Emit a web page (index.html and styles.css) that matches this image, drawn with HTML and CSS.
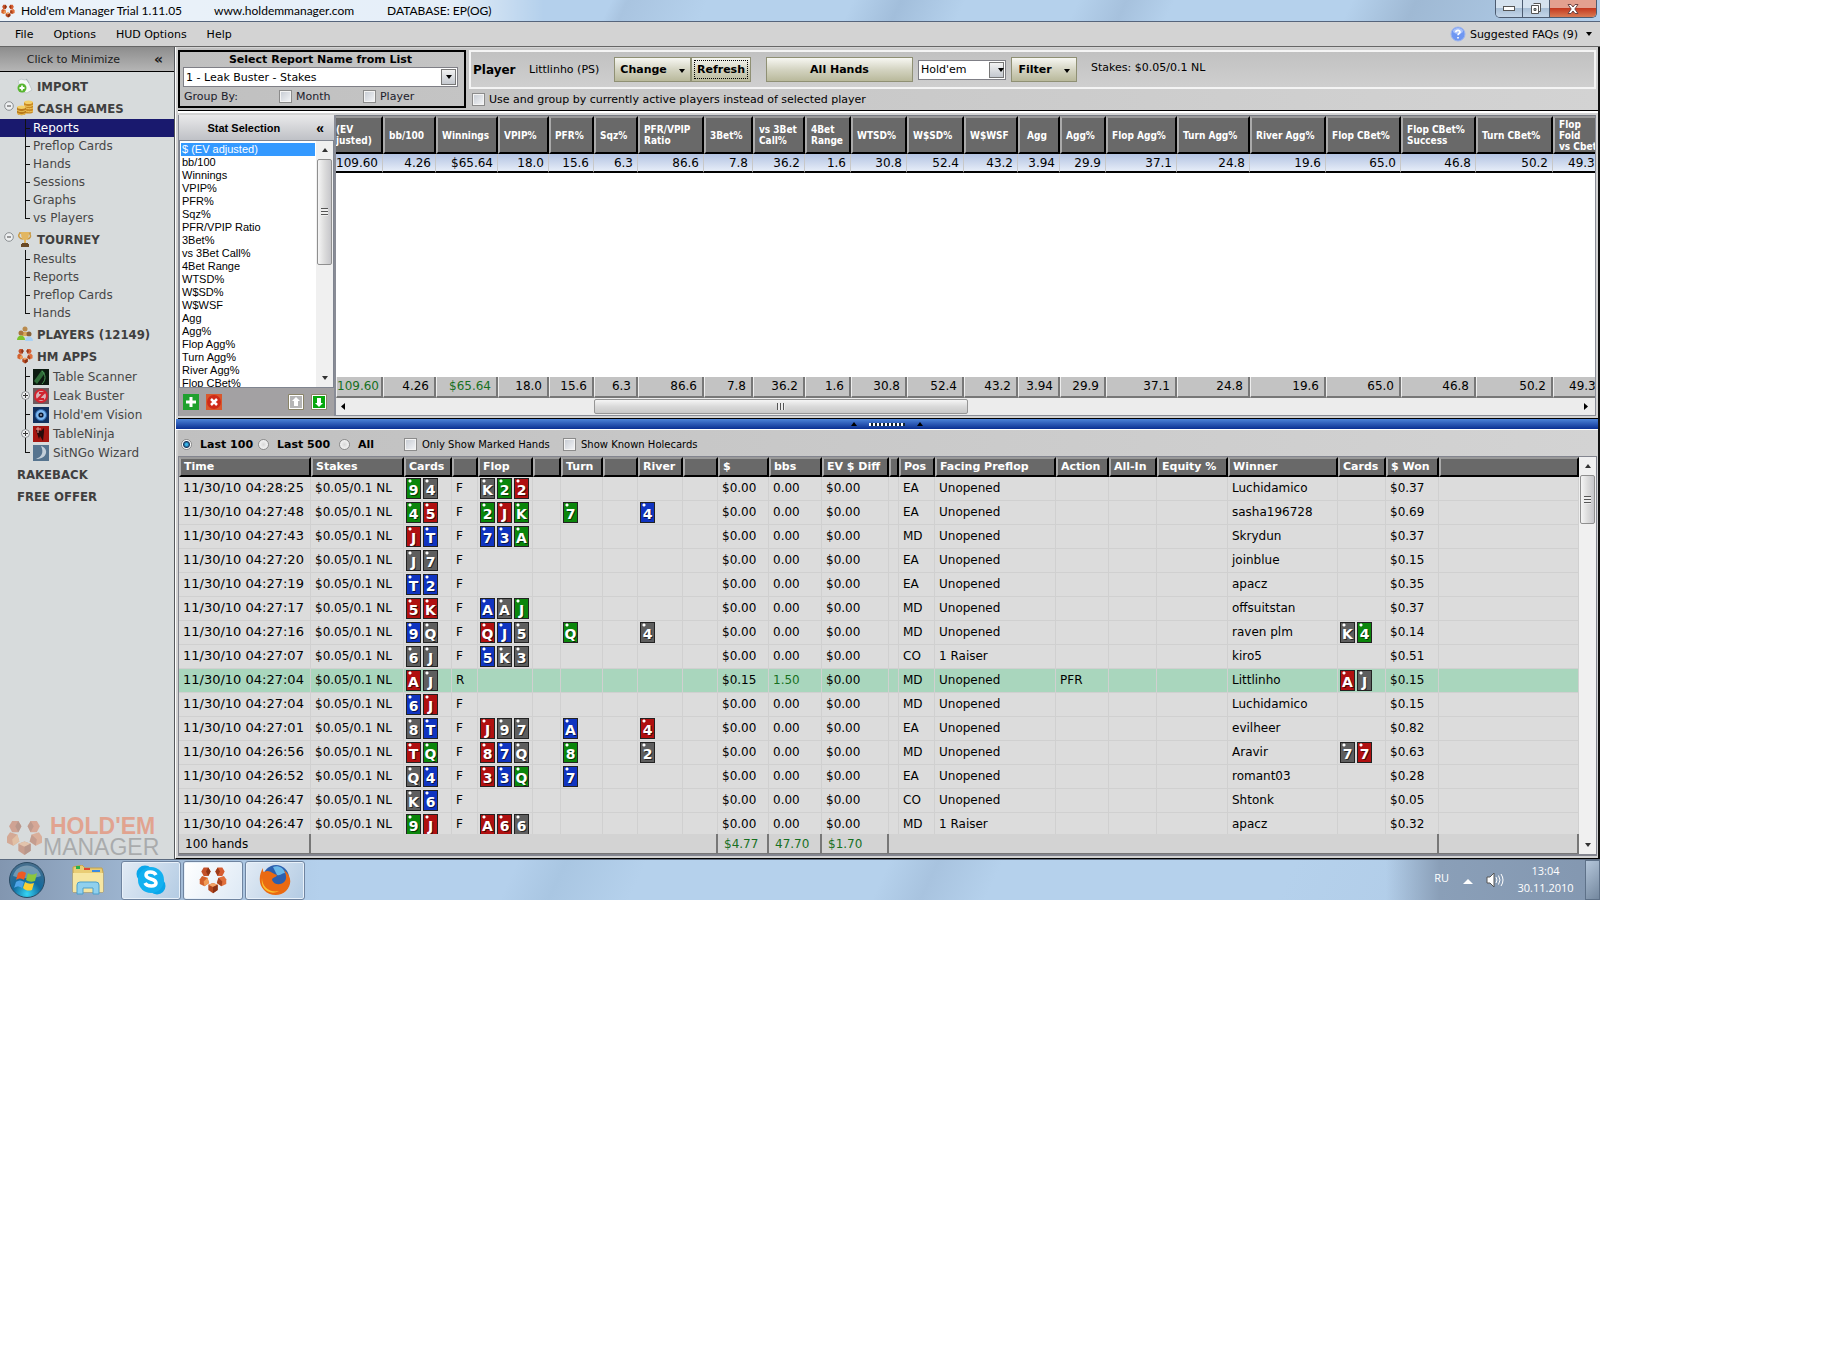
FILE: index.html
```html
<!DOCTYPE html>
<html lang="en">
<head>
<meta charset="utf-8">
<title>Hold'em Manager</title>
<link rel="stylesheet" href="styles.css">
</head>
<body>
<svg class="defs" aria-hidden="true">
  <symbol id="hm" viewBox="0 0 36 36">
    <path d="M6 2h6l3 5-3 6H6L3 7z" fill="#c4512a"/><path d="M12 2l3 5-3 6-3-6z" fill="#8e3416"/>
    <path d="M24 2h6l3 5-3 6h-6l-3-6z" fill="#d65c30"/><path d="M24 2l-3 5 3 6 3-6z" fill="#9c3b19"/>
    <path d="M4 13l7 2 2 7-6 4-6-3v-6z" fill="#d2602c"/><path d="M11 15l2 7-6 4-1-6z" fill="#f09a55"/>
    <path d="M32 13l-7 2-2 7 6 4 6-3v-6z" fill="#e0703c"/><path d="M25 15l-2 7 6 4 1-6z" fill="#a9431d"/>
    <path d="M12 24l6-2 6 2v7l-6 4-6-4z" fill="#b4481f"/><path d="M12 24l6-2 6 2-6 3z" fill="#f3a468"/><path d="M18 27l6-3v7l-6 4z" fill="#8b3214"/>
  </symbol>
  <symbol id="minus" viewBox="0 0 10 10"><circle cx="5" cy="5" r="4.300" fill="#eef0f1" stroke="#8b8f92"/><path d="M3 5h4" stroke="#444"/></symbol>
  <symbol id="plus" viewBox="0 0 12 19"><path d="M5.500 0v19" stroke="#111"/><circle cx="5.500" cy="9.500" r="4" fill="#eef0f1" stroke="#8b8f92"/><path d="M3 9.500h5M5.500 7v5" stroke="#333"/></symbol>
  <symbol id="down" viewBox="0 0 6 4"><path d="M0 0h6L3 4z" fill="currentColor"/></symbol>
  <symbol id="up" viewBox="0 0 6 4"><path d="M0 4h6L3 0z" fill="currentColor"/></symbol>
</svg>
<div class="desktop">
  <header class="titlebar">
    <svg class="app-icon"><use href="#hm"/></svg>
    <span class="t1">Hold'em Manager Trial 1.11.05</span><span class="t2">www.holdemmanager.com</span><span>DATABASE: EP(OG)</span>
    <div class="win-buttons">
      <button aria-label="Minimize"><svg width="12" height="6"><rect x=".5" y=".5" width="11" height="4" fill="#fff" stroke="#555"/></svg></button>
      <button aria-label="Restore"><svg width="12" height="12"><path d="M3.500 .5h7v8h-2M1.500 2.500h7v8h-7z" fill="#fff" stroke="#555"/><path d="M4 5.500h2v2H4z" fill="#9bb" stroke="#555"/></svg></button>
      <button class="close" aria-label="Close"><svg width="12" height="10"><path d="M1 .5h3l2 2.500L8 .5h3L7.800 5 11 9.500H8L6 7 4 9.500H1L4.200 5z" fill="#fff" stroke="#6b4545"/></svg></button>
    </div>
  </header>
  <nav class="menubar">
    <a href="#">File</a><a href="#">Options</a><a href="#">HUD Options</a><a href="#">Help</a>
    <a href="#" class="faq"><svg width="16" height="16"><circle cx="8" cy="8" r="7" fill="#6f97f2" stroke="#9db5ee"/><ellipse cx="8" cy="5" rx="5" ry="3" fill="#a9c2fb"/><path d="M5.800 6.300C6 3.600 10.200 3.800 10 6.200 9.900 7.600 8 7.500 8 9.300M8 11v1.600" stroke="#fff" stroke-width="1.700" fill="none"/></svg>Suggested FAQs (9)<svg class="tri"><use href="#down"/></svg></a>
  </nav>

  <div class="work">
    <aside class="sidebar">
      <button class="collapse">Click to Minimize <b>«</b></button>
      <nav class="tree">
        <h2><svg class="ico" viewBox="0 0 16 16"><path d="M4 1l4 1 2-1 5 11-5 3-5-1L1 3z" fill="#f6f8f8" stroke="#c2cacc"/><path d="M9 1l3 4" stroke="#a9b2b4"/><circle cx="5" cy="10" r="4.500" fill="#58b530"/><path d="M5 7.500v5M2.500 10h5" stroke="#fff" stroke-width="1.800"/></svg>IMPORT</h2>
        <h2 class="open"><svg class="exp"><use href="#minus"/></svg><svg class="ico" viewBox="0 0 16 16"><path d="M7 2v10c0 2 9 2 9 0V2z" fill="#c98a24"/><path d="M0 7v6c0 3 9 3 9 0V7z" fill="#b87a1c"/><g fill="#f3cf6a"><ellipse cx="11.500" cy="2.300" rx="4.300" ry="1.800"/><ellipse cx="4.500" cy="7.300" rx="4.300" ry="1.700"/></g><path d="M7 5c2 2 7 2 9 0M9 8c2 1 5 1 7 0M9 11c2 1 5 1 7 0M0 10c2 2 7 2 9 0M0 13c2 2 7 2 9 0" stroke="#f0c65c" fill="none"/></svg>CASH GAMES</h2>
        <ul>
          <li class="sel"><a href="#">Reports</a></li><li><a href="#">Preflop Cards</a></li><li><a href="#">Hands</a></li><li><a href="#">Sessions</a></li><li><a href="#">Graphs</a></li><li><a href="#">vs Players</a></li>
        </ul>
        <h2 class="open"><svg class="exp"><use href="#minus"/></svg><svg class="ico" viewBox="0 0 16 16"><path d="M2 2h12M3 2c-3 3 0 6 3 6M12 2c3 3 1 6-2 6" stroke="#c99a44" stroke-width="1.500" fill="none"/><path d="M4 1h8c0 5-1 8-3 8v3H7V9C5 9 4 6 4 1z" fill="#e2b660"/><path d="M5 12h6v1H5zM4 13h8v3H4z" fill="#6a4a26"/></svg>TOURNEY</h2>
        <ul>
          <li><a href="#">Results</a></li><li><a href="#">Reports</a></li><li><a href="#">Preflop Cards</a></li><li><a href="#">Hands</a></li>
        </ul>
        <h2><svg class="ico" viewBox="0 0 16 16"><circle cx="8" cy="3" r="2.500" fill="#b98b4e"/><path d="M5 10V6h6v4z" fill="#d9a95c"/><circle cx="4" cy="7" r="2.500" fill="#a9743c"/><path d="M0 14c0-6 8-6 8 0z" fill="#7cc32c"/><circle cx="12" cy="8" r="2.500" fill="#8a6238"/><path d="M8 15c0-6 8-6 8 0z" fill="#a9d0f3"/></svg>PLAYERS (12149)</h2>
        <h2><svg class="ico"><use href="#hm"/></svg>HM APPS</h2>
        <ul class="apps">
          <li><a href="#"><svg class="ico" viewBox="0 0 16 16"><path d="M0 0h16v16H0z" fill="#0c1a10"/><path d="M1 12L9 1l3 3-8 11z" fill="#2e6a38"/><path d="M9 2c4 4 4 9 0 13" stroke="#4c9a58" fill="none"/></svg>Table Scanner</a></li>
          <li class="more"><svg class="joint"><use href="#plus"/></svg><a href="#"><svg class="ico" viewBox="0 0 16 16"><path d="M0 0h16v16H0z" fill="#6d5a5e"/><circle cx="8" cy="8" r="6" fill="#d8b0b4" stroke="#d2232e" stroke-width="2"/><path d="M4 12l8-8M6 5h4l-4 6h5" stroke="#d2232e" stroke-width="2" fill="none"/></svg>Leak Buster</a></li>
          <li><a href="#"><svg class="ico" viewBox="0 0 16 16"><path d="M0 0h16v16H0z" fill="#12315e"/><circle cx="8" cy="8" r="5.500" fill="#7db7ee" stroke="#2b66ac"/><circle cx="8" cy="8" r="2.600" fill="#0a1730"/><circle cx="8" cy="8" r=".8" fill="#fff"/></svg>Hold'em Vision</a></li>
          <li class="more"><svg class="joint"><use href="#plus"/></svg><a href="#"><svg class="ico" viewBox="0 0 16 16"><path d="M0 0h16v16H0z" fill="#a51610"/><path d="M3 4l5 1 3-3v4l-1 9-3-5-1 3z" fill="#2a0b0a"/><path d="M5 1v6M3 3h5" stroke="#e59a90"/></svg>TableNinja</a></li>
          <li><a href="#"><svg class="ico" viewBox="0 0 16 16"><path d="M0 0h16v16H0z" fill="#56748f"/><path d="M8 1c8 2 7 13-5 13 6-2 8-7 5-13z" fill="#c3cfda"/></svg>SitNGo Wizard</a></li>
        </ul>
        <h2>RAKEBACK</h2>
        <h2>FREE OFFER</h2>
      </nav>
      <div class="brand"><svg><use href="#hm"/></svg><div><strong>HOLD'EM</strong><span>MANAGER</span></div></div>
    </aside>

    <main>
      <section class="toolbar">
        <div class="report-box">
          <label for="rep">Select Report Name from List</label>
          <div class="drop"><select id="rep"><option>1 - Leak Buster - Stakes</option></select><span><svg class="tri"><use href="#down"/></svg></span></div>
          <div class="group"><span>Group By:</span><label class="chk g1"><input type="checkbox">Month</label><label class="chk"><input type="checkbox">Player</label></div>
        </div>
        <div class="player-area">
          <div class="player-bar">
            <strong>Player</strong><span class="pname">Littlinho (PS)</span>
            <button class="change">Change <svg class="tri"><use href="#down"/></svg></button><button class="refresh">Refresh</button>
            <button class="all">All Hands</button>
            <div class="drop game"><select aria-label="Game"><option>Hold'em</option></select><span><svg class="tri"><use href="#down"/></svg></span></div>
            <button class="filter">Filter <svg class="tri"><use href="#down"/></svg></button>
            <span class="stakes">Stakes: $0.05/0.1 NL</span>
          </div>
          <label class="chk active"><input type="checkbox">Use and group by currently active players instead of selected player</label>
        </div>
      </section>

      <section class="stats">
        <div class="stat-pane">
          <h3><span>Stat Selection</span><b>«</b></h3>
          <div class="stat-body">
            <ul>
              <li class="on">$ (EV adjusted)</li><li>bb/100</li><li>Winnings</li><li>VPIP%</li><li>PFR%</li><li>Sqz%</li><li>PFR/VPIP Ratio</li><li>3Bet%</li><li>vs 3Bet Call%</li><li>4Bet Range</li><li>WTSD%</li><li>W$SD%</li><li>W$WSF</li><li>Agg</li><li>Agg%</li><li>Flop Agg%</li><li>Turn Agg%</li><li>River Agg%</li><li>Flop CBet%</li>
            </ul>
            <div class="vbar"><svg class="arr"><use href="#up"/></svg><div class="thumb t-long"><i></i></div><svg class="arr end"><use href="#down"/></svg></div>
          </div>
          <div class="stat-tools">
            <button aria-label="Add"><svg width="16" height="16"><path d="M0 0h16v16H0z" fill="#1fa02e"/><path d="M8 3v10M3 8h10" stroke="#fff" stroke-width="3"/></svg></button>
            <button aria-label="Remove"><svg width="16" height="16"><path d="M0 0h16v16H0z" fill="#d9572c"/><circle cx="8" cy="8" r="7" fill="#cf2b18"/><path d="M5 5l6 6M11 5l-6 6" stroke="#fff" stroke-width="2.500"/></svg></button>
            <button class="push" aria-label="Move up"><svg width="16" height="16"><path d="M.5 .5h15v15H.5z" fill="#fff" stroke="#8a8468"/><path d="M2 2h12v12H2z" fill="#b5b5b5"/><path d="M8 3l4 4h-2v5H6V7H4z" fill="#fff"/></svg></button>
            <button class="dn" aria-label="Move down"><svg width="16" height="16"><path d="M.5 .5h15v15H.5z" fill="#fff" stroke="#8a8468"/><path d="M2 2h12v12H2z" fill="#06a80c"/><path d="M8 13l4-4h-2V4H6v5H4z" fill="#fff"/></svg></button>
          </div>
        </div>
        <div class="stat-grid">
          <table class="sg">
            <colgroup><col class="w47"><col class="w53"><col class="w62"><col class="w51"><col class="w45"><col class="w44"><col class="w66"><col class="w49"><col class="w52"><col class="w46"><col class="w56"><col class="w57"><col class="w54"><col class="w42"><col class="w46"><col class="w71"><col class="w73"><col class="w76"><col class="w75"><col class="w75"><col class="w77"><col></colgroup>
            <thead><tr><th class="cut">(EV<br>justed)<th>bb/100<th>Winnings<th>VPIP%<th>PFR%<th>Sqz%<th>PFR/VPIP<br>Ratio<th>3Bet%<th>vs 3Bet<br>Call%<th>4Bet<br>Range<th>WTSD%<th>W$SD%<th>W$WSF<th class="mid">Agg<th>Agg%<th>Flop Agg%<th>Turn Agg%<th>River Agg%<th>Flop CBet%<th>Flop CBet%<br>Success<th>Turn CBet%<th class="last">Flop<br>Fold<br>vs Cbet</tr></thead>
            <tbody><tr><td>109.60<td>4.26<td>$65.64<td>18.0<td>15.6<td>6.3<td>86.6<td>7.8<td>36.2<td>1.6<td>30.8<td>52.4<td>43.2<td>3.94<td>29.9<td>37.1<td>24.8<td>19.6<td>65.0<td>46.8<td>50.2<td class="last">49.3</tr></tbody>
          </table>
          <div class="blank"></div>
          <table class="sg totals">
            <colgroup><col class="w47"><col class="w53"><col class="w62"><col class="w51"><col class="w45"><col class="w44"><col class="w66"><col class="w49"><col class="w52"><col class="w46"><col class="w56"><col class="w57"><col class="w54"><col class="w42"><col class="w46"><col class="w71"><col class="w73"><col class="w76"><col class="w75"><col class="w75"><col class="w77"><col></colgroup>
            <tbody><tr><td class="pos">109.60<td>4.26<td class="pos">$65.64<td>18.0<td>15.6<td>6.3<td>86.6<td>7.8<td>36.2<td>1.6<td>30.8<td>52.4<td>43.2<td>3.94<td>29.9<td>37.1<td>24.8<td>19.6<td>65.0<td>46.8<td>50.2<td class="last">49.3</tr></tbody>
          </table>
          <div class="hbar"><svg width="4" height="7"><path d="M4 0v7L0 3.500z"/></svg><div class="hthumb"><i></i></div><svg class="end" width="4" height="7"><path d="M0 0v7l4-3.500z"/></svg></div>
        </div>
      </section>

      <div class="splitter"><svg class="tri"><use href="#up"/></svg><i></i><svg class="tri"><use href="#up"/></svg></div>

      <section class="hands">
        <div class="range">
          <label class="rad"><input type="radio" name="n" checked>Last 100</label><label class="rad"><input type="radio" name="n">Last 500</label><label class="rad all-r"><input type="radio" name="n">All</label>
          <label class="chk small k1"><input type="checkbox">Only Show Marked Hands</label><label class="chk small"><input type="checkbox">Show Known Holecards</label>
        </div>
        <div class="hand-frame">
          <div class="hand-tables">
            <div class="scroll">
            <table class="hg">
              <colgroup><col class="w132"><col class="w93"><col class="w48"><col class="w26"><col class="w55"><col class="w28"><col class="w42"><col class="w35"><col class="w45"><col class="w35"><col class="w51"><col class="w53"><col class="w67"><col class="w10"><col class="w36"><col class="w121"><col class="w53"><col class="w48"><col class="w71"><col class="w110"><col class="w48"><col class="w53"><col></colgroup>
              <thead><tr><th>Time<th>Stakes<th>Cards<th><th>Flop<th><th>Turn<th><th>River<th><th>$<th>bbs<th>EV $ Diff<th><th>Pos<th>Facing Preflop<th>Action<th>All-In<th>Equity %<th>Winner<th>Cards<th>$ Won<th></tr></thead>
              <tbody>
              <tr><td>11/30/10 04:28:25<td>$0.05/0.1 NL<td class="cs"><i class="g">9</i><i class="k">4</i><td>F<td class="cs"><i class="k">K</i><i class="g">2</i><i class="r">2</i><td><td class="cs"><td><td class="cs"><td><td>$0.00<td>0.00<td>$0.00<td><td>EA<td>Unopened<td><td><td><td>Luchidamico<td class="cs"><td>$0.37<td></tr>
              <tr><td>11/30/10 04:27:48<td>$0.05/0.1 NL<td class="cs"><i class="g">4</i><i class="r">5</i><td>F<td class="cs"><i class="g">2</i><i class="r">J</i><i class="g">K</i><td><td class="cs"><i class="g">7</i><td><td class="cs"><i class="b">4</i><td><td>$0.00<td>0.00<td>$0.00<td><td>EA<td>Unopened<td><td><td><td>sasha196728<td class="cs"><td>$0.69<td></tr>
              <tr><td>11/30/10 04:27:43<td>$0.05/0.1 NL<td class="cs"><i class="r">J</i><i class="b">T</i><td>F<td class="cs"><i class="b">7</i><i class="b">3</i><i class="g">A</i><td><td class="cs"><td><td class="cs"><td><td>$0.00<td>0.00<td>$0.00<td><td>MD<td>Unopened<td><td><td><td>Skrydun<td class="cs"><td>$0.37<td></tr>
              <tr><td>11/30/10 04:27:20<td>$0.05/0.1 NL<td class="cs"><i class="k">J</i><i class="k">7</i><td>F<td class="cs"><td><td class="cs"><td><td class="cs"><td><td>$0.00<td>0.00<td>$0.00<td><td>EA<td>Unopened<td><td><td><td>joinblue<td class="cs"><td>$0.15<td></tr>
              <tr><td>11/30/10 04:27:19<td>$0.05/0.1 NL<td class="cs"><i class="b">T</i><i class="b">2</i><td>F<td class="cs"><td><td class="cs"><td><td class="cs"><td><td>$0.00<td>0.00<td>$0.00<td><td>EA<td>Unopened<td><td><td><td>apacz<td class="cs"><td>$0.35<td></tr>
              <tr><td>11/30/10 04:27:17<td>$0.05/0.1 NL<td class="cs"><i class="r">5</i><i class="r">K</i><td>F<td class="cs"><i class="b">A</i><i class="k">A</i><i class="g">J</i><td><td class="cs"><td><td class="cs"><td><td>$0.00<td>0.00<td>$0.00<td><td>MD<td>Unopened<td><td><td><td>offsuitstan<td class="cs"><td>$0.37<td></tr>
              <tr><td>11/30/10 04:27:16<td>$0.05/0.1 NL<td class="cs"><i class="b">9</i><i class="k">Q</i><td>F<td class="cs"><i class="r">Q</i><i class="b">J</i><i class="k">5</i><td><td class="cs"><i class="g">Q</i><td><td class="cs"><i class="k">4</i><td><td>$0.00<td>0.00<td>$0.00<td><td>MD<td>Unopened<td><td><td><td>raven plm<td class="cs"><i class="k">K</i><i class="g">4</i><td>$0.14<td></tr>
              <tr><td>11/30/10 04:27:07<td>$0.05/0.1 NL<td class="cs"><i class="k">6</i><i class="k">J</i><td>F<td class="cs"><i class="b">5</i><i class="k">K</i><i class="k">3</i><td><td class="cs"><td><td class="cs"><td><td>$0.00<td>0.00<td>$0.00<td><td>CO<td>1 Raiser<td><td><td><td>kiro5<td class="cs"><td>$0.51<td></tr>
              <tr class="won"><td>11/30/10 04:27:04<td>$0.05/0.1 NL<td class="cs"><i class="r">A</i><i class="k">J</i><td>R<td class="cs"><td><td class="cs"><td><td class="cs"><td><td>$0.15<td class="pos">1.50<td>$0.00<td><td>MD<td>Unopened<td>PFR<td><td><td>Littlinho<td class="cs"><i class="r">A</i><i class="k">J</i><td>$0.15<td></tr>
              <tr><td>11/30/10 04:27:04<td>$0.05/0.1 NL<td class="cs"><i class="b">6</i><i class="r">J</i><td>F<td class="cs"><td><td class="cs"><td><td class="cs"><td><td>$0.00<td>0.00<td>$0.00<td><td>MD<td>Unopened<td><td><td><td>Luchidamico<td class="cs"><td>$0.15<td></tr>
              <tr><td>11/30/10 04:27:01<td>$0.05/0.1 NL<td class="cs"><i class="k">8</i><i class="b">T</i><td>F<td class="cs"><i class="r">J</i><i class="k">9</i><i class="k">7</i><td><td class="cs"><i class="b">A</i><td><td class="cs"><i class="r">4</i><td><td>$0.00<td>0.00<td>$0.00<td><td>EA<td>Unopened<td><td><td><td>evilheer<td class="cs"><td>$0.82<td></tr>
              <tr><td>11/30/10 04:26:56<td>$0.05/0.1 NL<td class="cs"><i class="r">T</i><i class="g">Q</i><td>F<td class="cs"><i class="r">8</i><i class="b">7</i><i class="k">Q</i><td><td class="cs"><i class="g">8</i><td><td class="cs"><i class="k">2</i><td><td>$0.00<td>0.00<td>$0.00<td><td>MD<td>Unopened<td><td><td><td>Aravir<td class="cs"><i class="k">7</i><i class="r">7</i><td>$0.63<td></tr>
              <tr><td>11/30/10 04:26:52<td>$0.05/0.1 NL<td class="cs"><i class="k">Q</i><i class="b">4</i><td>F<td class="cs"><i class="r">3</i><i class="b">3</i><i class="g">Q</i><td><td class="cs"><i class="b">7</i><td><td class="cs"><td><td>$0.00<td>0.00<td>$0.00<td><td>EA<td>Unopened<td><td><td><td>romant03<td class="cs"><td>$0.28<td></tr>
              <tr><td>11/30/10 04:26:47<td>$0.05/0.1 NL<td class="cs"><i class="k">K</i><i class="b">6</i><td>F<td class="cs"><td><td class="cs"><td><td class="cs"><td><td>$0.00<td>0.00<td>$0.00<td><td>CO<td>Unopened<td><td><td><td>Shtonk<td class="cs"><td>$0.05<td></tr>
              <tr><td>11/30/10 04:26:47<td>$0.05/0.1 NL<td class="cs"><i class="g">9</i><i class="r">J</i><td>F<td class="cs"><i class="r">A</i><i class="r">6</i><i class="k">6</i><td><td class="cs"><td><td class="cs"><td><td>$0.00<td>0.00<td>$0.00<td><td>MD<td>1 Raiser<td><td><td><td>apacz<td class="cs"><td>$0.32<td></tr>
              </tbody>
            </table>
            </div>
            <table class="hf">
              <colgroup><col class="w132"><col class="w407"><col class="w51"><col class="w53"><col class="w67"><col class="w550"><col></colgroup>
              <tbody><tr><td>100 hands<td><td class="pos">$4.77<td class="pos">47.70<td class="pos">$1.70<td><td></tr></tbody>
            </table>
          </div>
          <div class="vbar"><svg class="arr"><use href="#up"/></svg><div class="thumb t-short"><i></i></div><svg class="arr end"><use href="#down"/></svg></div>
        </div>
      </section>
    </main>
  </div>

  <footer class="taskbar">
    <button class="orb" aria-label="Start"><svg width="38" height="38" viewBox="0 0 38 38"><defs><radialGradient id="og" cx=".5" cy=".9" r=".9"><stop offset="0" stop-color="#35d6f5"/><stop offset=".45" stop-color="#126a9e"/><stop offset="1" stop-color="#4a6f8c"/></radialGradient></defs><circle cx="19" cy="19" r="17.500" fill="url(#og)" stroke="#294a63"/><path d="M5 15C9 1 29 1 33 15c-8 3-20 3-28 0z" fill="#fff" opacity=".3"/><path d="M10 12c3-2 5-2 8 0l-2 7c-3-2-5-2-8 0z" fill="#ee5a24"/><path d="M20 12c3 2 5 2 9 0l-2 8c-3 1-6 1-9-1z" fill="#8cc63c"/><path d="M8 21c3-2 5-2 8 0l-2 6c-3-2-5-2-8 0z" fill="#4fa4e8"/><path d="M17 21c3 2 6 2 9 1l-2 7c-3 1-6 1-9-2z" fill="#fdd032"/></svg></button>
    <button class="expl" aria-label="Explorer"><svg width="32" height="30" viewBox="0 0 32 30"><path d="M1 2l9-2 3 3h17l1 4v20H1z" fill="#e9cd75" stroke="#c5a34c"/><path d="M4 1h4v3H4z" fill="#28b14c"/><path d="M12 3h6v2h-6z" fill="#e2472f"/><path d="M20 5h8v2h-8z" fill="#3c8be0"/><path d="M1 8h30v19H1z" fill="#f6e6a2"/><path d="M5 29V20q0-3 3-3h16q3 0 3 3v9h-6v-6H11v6z" fill="#8fd0ee" stroke="#4c9fcb"/></svg></button>
    <button class="task" aria-label="Skype"><svg width="32" height="32" viewBox="0 0 32 32"><circle cx="10" cy="10" r="8.500" fill="#0aa6ea"/><circle cx="22" cy="22" r="8.500" fill="#0aa6ea"/><circle cx="16" cy="16" r="13" fill="#12b0f0"/><path d="M21 11c-2-4-10-4-10 0 0 5 10 3 10 8 0 4-9 4-11 0" stroke="#fff" stroke-width="3.500" fill="none"/></svg></button>
    <button class="task cur" aria-label="Hold'em Manager"><svg width="28" height="28"><use href="#hm"/></svg></button>
    <button class="task" aria-label="Firefox"><svg width="32" height="32" viewBox="0 0 32 32"><circle cx="17" cy="14" r="13" fill="#2c5fae"/><path d="M14 3c5-2 11 1 12 6-3 0-4 3-8 2z" fill="#69b7e8"/><path d="M4 4c0 3 0 3 1 4C11 5 13 10 18 11c-1 3-5 2-5 5 2 5 9 6 13 1 2-3 1-7-1-11 8 6 8 15 2 21-6 6-17 5-22-1C-1 20 0 10 4 4z" fill="#ea6a12"/><path d="M3 14c0 9 8 15 17 13-9 5-19-2-17-13z" fill="#fcc02e"/></svg></button>
    <div class="tray">
      <span class="lang">RU</span><svg class="trayup" width="10" height="5"><path d="M0 5h10L5 0z" fill="#fff"/></svg>
      <svg width="18" height="16" viewBox="0 0 18 16"><path d="M1 5h3l4-4v14l-4-4H1z" fill="#fff" stroke="#555"/><path d="M10 5q2 3 0 6M12.500 3.500q3 4.500 0 9M15 2q4 6 0 12" stroke="#fff" fill="none"/></svg>
      <div class="clock">13:04<br>30.11.2010</div>
      <button class="show" aria-label="Show desktop"></button>
    </div>
  </footer>
</div>
</body>
</html>
```
FILE: styles.css
```css
* { box-sizing: border-box; }
body { margin: 0; background: #fff; color: #000; font: 11px "DejaVu Sans", Verdana, sans-serif; }
button { font: inherit; color: inherit; padding: 0; border: 0; background: none; }
a { color: inherit; text-decoration: none; }
ul { margin: 0; padding: 0; list-style: none; }
.defs { display: none; }
.desktop { margin-right: 224px; }
.tri { width: 6px; height: 4px; flex: none; color: #000; }

/* window title and menu */
.titlebar { display: flex; align-items: center; height: 22px; padding: 0 3px 0 1px; border-bottom: 1px solid #56657c;
  font: 12px Lato, "Open Sans", sans-serif;
  background: linear-gradient(90deg, rgba(255,255,255,.75) 0, rgba(255,255,255,.65) 28%, rgba(255,255,255,0) 34%),
    linear-gradient(115deg, #b4d0ec 0 38%, #a9c4e0 39%, #b5d1ec 44% 53%, #a2bedb 56%, #b5d1ec 60% 67%, #a6c1dd 70%, #b5d1ec 73% 84%, #9fb9d4 88%, #b4d0ec); }
.app-icon { width: 14px; height: 14px; margin-right: 6px; }
.t1 { width: 193px; }
.t2 { width: 173px; }
.win-buttons { display: flex; margin-left: auto; align-self: flex-start; height: 18px; border: 1px solid #4c5b70; border-top: 0; border-radius: 0 0 5px 5px; overflow: hidden; }
.win-buttons button { display: flex; align-items: center; justify-content: center; width: 27px; border-right: 1px solid #4c5b70; background: linear-gradient(#d5e2ef 0 48%, #a9bfd6 50%, #c3d5e8); }
.win-buttons .close { width: 46px; border: 0; background: linear-gradient(#e3a08f 0 45%, #c43a20 50%, #d97a54); }
.menubar { display: flex; align-items: center; height: 25px; padding: 0 8px 0 15px; gap: 20px; background: #d3d3d3; border-bottom: 1px solid #666; }
.faq { display: flex; align-items: center; gap: 4px; margin-left: auto; }
.faq .tri { margin-left: 4px; }

/* sidebar */
.work { display: flex; }
.sidebar { display: flex; flex-direction: column; width: 175px; flex: none; background: #d7dbdc; border-right: 1px solid #55585c; }
.collapse { display: flex; justify-content: flex-end; align-items: center; gap: 34px; height: 25px; padding-right: 11px; border-bottom: 1px solid #000; background: linear-gradient(#8d8d8d, #b5b5b5); color: #1b1b1b; }
.collapse b, h3 b { font-size: 14px; }
.tree { padding-top: 3px; color: #474747; font-size: 12px; }
.tree h2 { display: flex; align-items: center; gap: 4px; height: 22px; margin: 0; padding-left: 17px; font: bold 13px "DejaVu Sans Condensed", "DejaVu Sans", sans-serif; color: #3f3f3f; }
.tree h2.open { padding-left: 4px; }
.exp { width: 10px; height: 10px; margin-right: -1px; margin-bottom: 4px; }
.ico { width: 16px; height: 16px; flex: none; }
.tree ul { padding-bottom: 1px; }
.tree li { display: flex; align-items: center; gap: 3px; height: 18px; padding-left: 25px; }
.tree li::before { content: ""; width: 5px; height: 100%; background: linear-gradient(#111, #111) 0 0 / 1px 100% no-repeat, linear-gradient(#111, #111) 0 50% / 5px 1px no-repeat; }
.tree li:last-child::before { background-size: 1px 50%, 5px 1px; }
.tree li.sel { background: #19196e; color: #fff; }
.apps li { height: 19px; }
.apps a { display: flex; align-items: center; gap: 4px; }
.tree li.more { padding-left: 20px; gap: 1px; }
.tree li.more::before { display: none; }
.joint { width: 12px; height: 19px; }
.brand { display: flex; align-items: center; margin-top: auto; padding: 0 0 1px 6px; opacity: .4; font-family: "Liberation Sans", Arial, sans-serif; }
.brand svg { width: 37px; height: 37px; }
.brand strong, .brand span { display: block; font-size: 23px; line-height: 21px; }
.brand strong { padding-left: 7px; color: #f0501e; }
.brand span { color: #666; }

/* top tool area */
main { flex: 1; min-width: 0; padding: 1px 1px 1px 2px; background: #d3d3d3; border-right: 2px solid #111; border-left: 1px solid #fff; border-bottom: 1px solid #000; }
.toolbar { display: flex; gap: 3px; height: 63px; padding-top: 2px; background: linear-gradient(90deg, #c0c0c0, #d3d3d3); border-bottom: 1px solid #000; margin-right: -1px; }
.report-box { display: flex; flex-direction: column; width: 288px; height: 58px; flex: none; padding: 0 6px 0 3px; border: 2px solid #000; }
.report-box > label { height: 15px; line-height: 15px; text-align: center; font-weight: bold; }
.drop { display: flex; height: 20px; border: 1px solid #7f7f86; background: #fff; }
.drop select { flex: 1; min-width: 0; padding: 0 2px; border: 0; appearance: none; background: none; font: inherit; color: #000; }
.drop span { display: flex; align-items: center; justify-content: center; width: 15px; margin: 1px; border: 1px solid #777; background: linear-gradient(#f2f2f2, #c4c8cf); }
.group { display: flex; align-items: center; height: 19px; padding-left: 1px; color: #1c1c2c; }
.chk { display: flex; align-items: center; gap: 4px; }
.chk input { width: 13px; height: 13px; margin: 0; appearance: none; border: 1px solid #8b8b8b; box-shadow: inset 0 0 0 1px #f4f4f4; background: linear-gradient(135deg, #c5cad2, #f5f6f8); }
.g1 { width: 84px; margin-left: 41px; }
.player-area { flex: 1; min-width: 0; }
.player-bar { display: flex; align-items: center; height: 39px; margin-right: 2px; padding-left: 2px; border: 2px solid #f4f4f4; background: linear-gradient(#c1c1c1, #cfcfcf); }
.player-bar strong { width: 56px; font-size: 12px; }
.pname { width: 85px; }
.player-bar button { height: 25px; font-weight: bold; border: 1px solid #8f9074; background: linear-gradient(#f7f7f2, #d4d4c2 50%, #b9b99b); }
.player-bar .tri { margin-left: 8px; }
.player-bar .change { width: 77px; }
.player-bar .refresh { width: 60px; outline: 1px dotted #000; outline-offset: -4px; }
.player-bar .all { width: 147px; margin-left: 15px; }
.game { width: 88px; margin: 0 5px; }
.player-bar .filter { width: 66px; }
.stakes { margin: 0 0 4px 14px; }
.active { height: 20px; padding-left: 3px; }

/* statistics */
.stats { display: flex; height: 308px; margin-right: -1px; padding: 4px 2px 2px 0; border-bottom: 1px solid #000; box-shadow: inset 0 2px 0 #fff; }
.stat-pane { width: 158px; flex: none; border-right: 2px solid #898c96; border-left: 1px solid #898c96; background: #a3a1a3; }
h3 { display: flex; align-items: center; justify-content: flex-end; gap: 36px; height: 25px; margin: 0; padding-right: 10px; font: bold 11px "Liberation Sans", Arial, sans-serif; background: linear-gradient(#e9e9ea, #bfc1c6); }
.stat-body { display: flex; height: 248px; background: #fff; border: 1px solid #808590; }
.stat-body ul { flex: 1; overflow: hidden; padding: 2px 1px 0; font: 11px/13px "Liberation Sans", Arial, sans-serif; }
.stat-body li { height: 13px; padding-left: 1px; }
.stat-body .on { background: #3399ff; color: #fff; }
.vbar { display: flex; flex-direction: column; align-items: center; width: 17px; flex: none; padding: 7px 0; background: #f0f0f0; }
.arr { width: 6px; height: 4px; color: #333; }
.arr.end { margin-top: auto; }
.thumb { display: flex; align-items: center; justify-content: center; width: 15px; margin-top: 7px; border: 1px solid #8f8f8f; border-radius: 2px; background: linear-gradient(90deg, #f5f5f5, #dcdcdc 50%, #c6c6ca); }
.t-long { height: 106px; }
.t-short { height: 49px; }
.thumb i { width: 7px; height: 8px; background: repeating-linear-gradient(#555 0 1px, #eee 1px 3px); }
.stat-tools { display: flex; align-items: center; gap: 7px; height: 27px; padding: 0 7px 0 4px; }
.stat-tools button, .stat-tools svg { display: block; height: 16px; }
.stat-tools .push { margin-left: auto; }
.stat-grid { display: flex; flex-direction: column; flex: 1; min-width: 0; overflow: hidden; background: #fff; border-top: 1px solid #777b84; border-right: 1px solid #898c96; border-bottom: 1px solid #898c96; }
table { width: 100%; table-layout: fixed; border-collapse: separate; border-spacing: 0; }
th { text-align: left; color: #fff; background: #696969; border: 2px solid #000; border-left-color: #aaa; border-top: 2px solid #999; white-space: nowrap; overflow: hidden; }
.sg th { height: 38px; padding: 0 0 0 4px; font: bold 10px/11px "DejaVu Sans Condensed", "DejaVu Sans", sans-serif; }
.sg th.cut { padding: 0; border-left: 0; }
.sg th.mid { padding-left: 7px; }
.sg td { height: 19px; padding: 0 4px 0 0; text-align: right; font-size: 12px; line-height: 16px; white-space: nowrap; overflow: hidden; background: linear-gradient(#b3c3e2, #e6edf8); border-right: 1px solid #c8c8c8; border-bottom: 2px solid #000; }
.sg .last { border-right: 0; }
.sg td.last { padding: 0 0 0 15px; text-align: left; }
.blank { flex: 1; }
.totals td { height: 21px; padding-right: 5px; background: #c3c3c3; border-left: 1px solid #eee; border-right: 2px solid #777; border-bottom: 2px solid #777; line-height: 19px; }
td.pos { color: #17701f; }
.hbar { display: flex; align-items: center; height: 17px; padding: 0 7px 0 5px; background: #ececec; }
.hthumb { display: flex; align-items: center; justify-content: center; width: 30%; height: 15px; margin-left: 20%; border: 1px solid #959595; border-radius: 2px; background: linear-gradient(#f5f5f5, #dadada 50%, #c8c8c8); }
.hthumb i { width: 8px; height: 7px; background: repeating-linear-gradient(90deg, #555 0 1px, #eee 1px 3px); }
.hbar .end { margin-left: auto; }
.splitter { display: flex; align-items: center; justify-content: center; gap: 12px; height: 11px; margin: 0 -1px 0 -2px; background: linear-gradient(#4d83d8, #0a2f92); border-bottom: 1px solid #fff; }
.splitter i { width: 36px; height: 3px; background: repeating-linear-gradient(90deg, #fff 0 2px, #123 2px 4px); }

/* hand list */
.range { display: flex; align-items: center; height: 26px; padding: 2px 0 0 3px; background: linear-gradient(90deg, #c0c0c0, #d3d3d3); }
.rad { display: flex; align-items: center; gap: 8px; width: 77px; font-weight: bold; }
.rad input { width: 11px; height: 11px; margin: 0; appearance: none; border: 1px solid #8b8b8b; border-radius: 50%; background: radial-gradient(circle, #d8d8d8, #fff); }
.rad input:checked { background: radial-gradient(circle, #3bb6ea 0 1px, #17375e 3px, #fff 4px); }
.rad.all-r { width: 69px; padding-left: 4px; }
.small { gap: 5px; font-size: 10px; }
.k1 { width: 159px; }
.hand-frame { display: flex; border: 1px solid #83858f; border-bottom-width: 2px; margin-bottom: 1px; }
.hand-tables { flex: 1; min-width: 0; }
.scroll { height: 377px; overflow: hidden; }
.hg th { height: 20px; padding: 0 0 0 3px; font: bold 11px/14px "DejaVu Sans", sans-serif; }
.hg td { height: 24px; padding: 0 0 2px 4px; background: #dcdcdc; border-right: 1px solid #d0d0d0; border-bottom: 1px solid #d0d0d0; font-size: 12px; line-height: 16px; white-space: nowrap; }
.hg td:first-child { font-size: 13px; }
.hg .won td { background: #a9d6bd; }
.hg td.cs { padding: 0 0 0 2px; font-size: 0; line-height: 0; }
.cs i { display: inline-block; width: 15px; height: 21px; margin-right: 2px; padding-top: 3px; border: 1px solid #222; vertical-align: top; overflow: hidden; text-align: center; color: #fff; font: bold 14px/17px "DejaVu Sans", sans-serif; text-shadow: 1px 1px 0 rgba(0,0,0,.6); background: radial-gradient(circle at 3px 2px, #fff 0 1px, transparent 2px), var(--suit); }
.g { --suit: #0b860b; }
.k { --suit: #5e5e5e; }
.r { --suit: #b01010; }
.b { --suit: #1034c0; }
.hf td { height: 20px; padding: 0 0 0 6px; background: #d3d3d3; border-right: 2px solid #777; border-bottom: 1px solid #777; font-size: 12px; line-height: 16px; white-space: nowrap; }
.w10 { width: 10px; } .w26 { width: 26px; } .w28 { width: 28px; } .w35 { width: 35px; } .w36 { width: 36px; }
.w42 { width: 42px; } .w44 { width: 44px; } .w45 { width: 45px; } .w46 { width: 46px; } .w47 { width: 47px; }
.w48 { width: 48px; } .w49 { width: 49px; } .w51 { width: 51px; } .w52 { width: 52px; } .w53 { width: 53px; }
.w54 { width: 54px; } .w55 { width: 55px; } .w56 { width: 56px; } .w57 { width: 57px; } .w62 { width: 62px; }
.w66 { width: 66px; } .w67 { width: 67px; } .w71 { width: 71px; } .w73 { width: 73px; } .w75 { width: 75px; }
.w76 { width: 76px; } .w77 { width: 77px; } .w93 { width: 93px; } .w110 { width: 110px; } .w121 { width: 121px; }
.w132 { width: 132px; } .w407 { width: 407px; } .w550 { width: 550px; }

/* taskbar */
.taskbar { display: flex; align-items: center; height: 41px; padding-left: 8px; border-top: 1px solid #5c6b80;
  background: linear-gradient(90deg, #8296b0 0, #9db5d0 8%, rgba(255,255,255,0) 20%),
    linear-gradient(115deg, #b4d0ec 0 32%, #a9c6e2 35%, #b5d1ec 40% 55%, #a8c3df 58%, #b5d1ec 62% 80%, #adc8e4); }
.taskbar svg { display: block; }
.orb { margin-right: 26px; }
.expl { margin-right: 17px; }
.task { display: flex; align-items: center; justify-content: center; width: 60px; height: 39px; margin-right: 2px; border: 1px solid #6f84a0; border-radius: 3px; background: linear-gradient(120deg, #e2ebf5, #b3cbe3); box-shadow: inset 0 0 0 1px #e8f1fa; }
.task.cur { background: linear-gradient(120deg, #fff, #dde9f5); }
.tray { display: flex; align-items: center; height: 100%; margin-left: auto; padding-left: 48px; color: #fff; font: 11px/17px "Open Sans", sans-serif; background: linear-gradient(90deg, transparent, #8a9fb8 25%, #8397b0); }
.lang { margin-bottom: 6px; }
.trayup { margin: 2px 13px 0 14px; }
.clock { width: 79px; margin-left: 2px; padding-bottom: 3px; text-align: center; }
.show { width: 15px; height: 100%; border: 1px solid #5e7188; background: linear-gradient(135deg, #b4c6da, #74889f); }
```
